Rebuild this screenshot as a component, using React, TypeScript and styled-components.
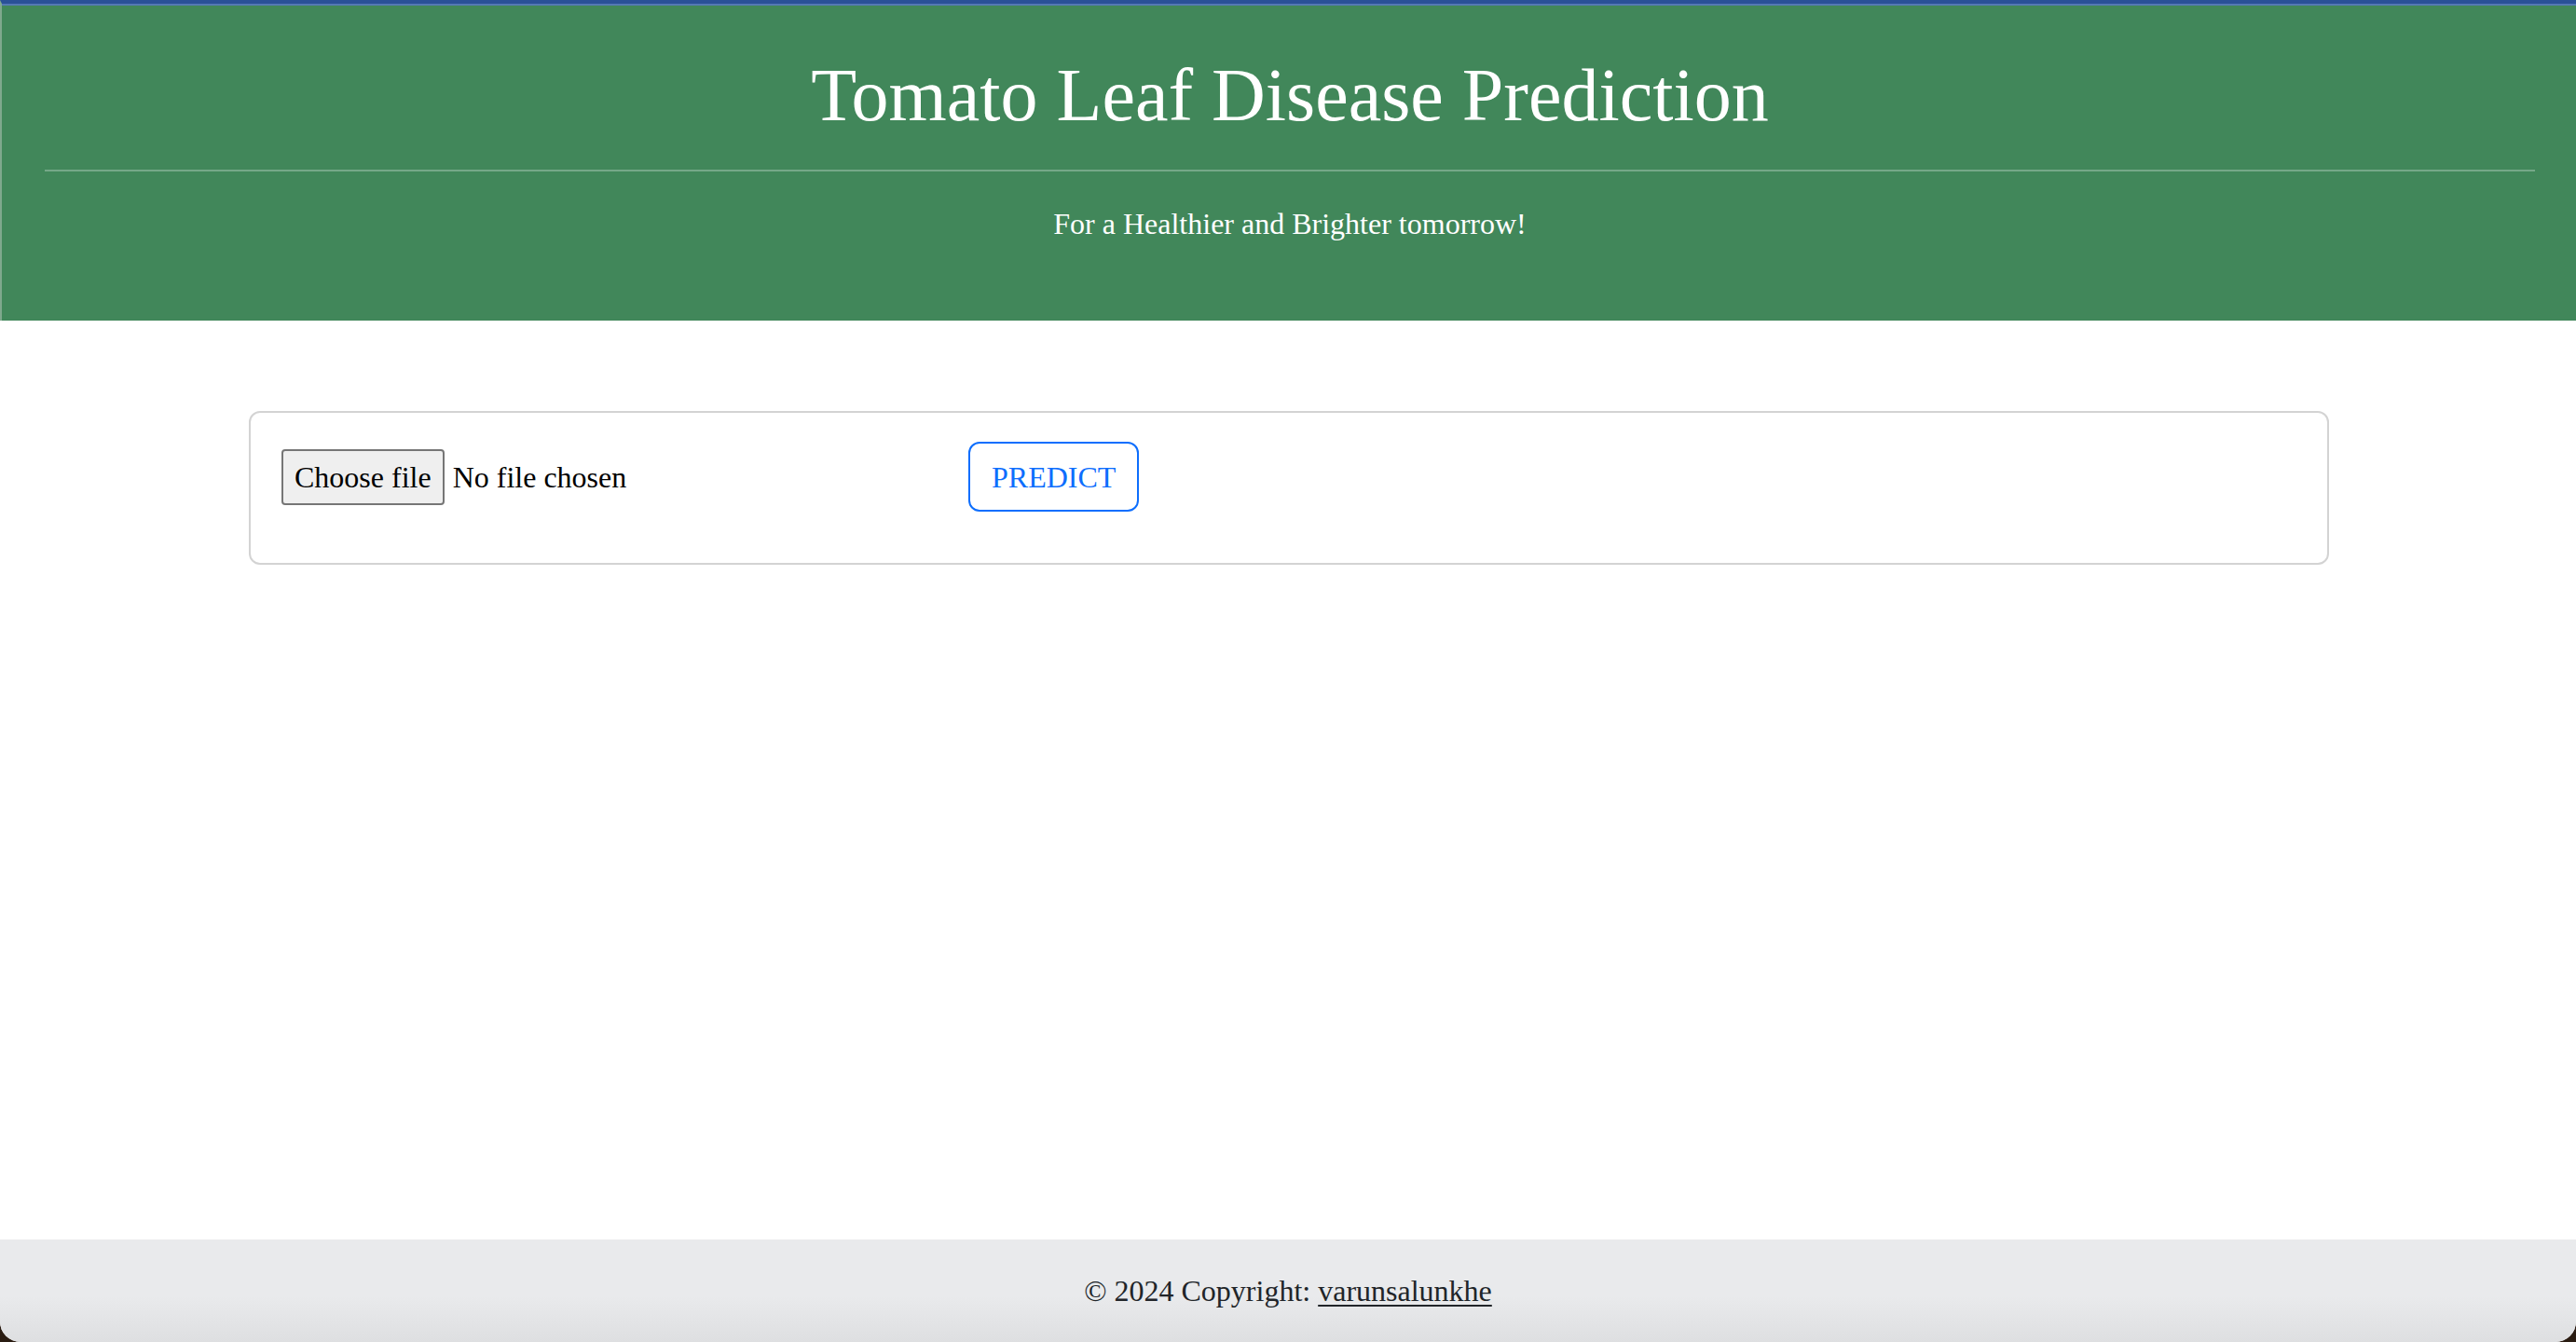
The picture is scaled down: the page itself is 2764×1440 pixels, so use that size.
import React from "react";
import styled, { createGlobalStyle } from "styled-components";

const GlobalStyle = createGlobalStyle`
  html, body {
    margin: 0;
    padding: 0;
    background: #2a1c12;
  }
  body {
    font-family: "Liberation Serif", "Times New Roman", serif;
    font-size: 32px;
    line-height: 1.5;
    color: #212529;
  }
  * { box-sizing: border-box; }
`;

const Window = styled.div`
  min-height: 1440px;
  display: flex;
  flex-direction: column;
  background: #ffffff;
  border-radius: 0 0 22px 22px;
  overflow: hidden;
`;

const Header = styled.header`
  background: #41875a;
  border-top: 4px solid #2a5197;
  border-left: 2px solid #7fa98d;
  box-shadow: inset 0 2px 0 #5479b4;
  padding: 50px 44px 48px 46px;
  text-align: center;
  color: #ffffff;
`;

const Title = styled.h1`
  margin: 0;
  font-size: 80px;
  font-weight: 400;
  line-height: 1.2;
`;

const Rule = styled.hr`
  margin: 32px 0;
  border: 0;
  border-top: 2px solid rgba(255, 255, 255, 0.28);
`;

const Tagline = styled.p`
  margin: 0 0 32px;
  font-size: 32px;
  line-height: 1.5;
`;

const Main = styled.main`
  flex: 1;
  padding: 97px 0 0 2px;
  display: flex;
  justify-content: center;
`;

const Card = styled.section`
  width: 2232px;
  align-self: flex-start;
  border: 2px solid #d3d3d3;
  border-radius: 12px;
  padding: 31px 32px 55px 33px;
`;

const FormRow = styled.form`
  display: flex;
  align-items: center;
  margin: 0;
`;

const FileField = styled.label`
  width: 737px;
  display: flex;
  align-items: center;
  gap: 9px;
  cursor: pointer;
`;

const FileButton = styled.span`
  display: inline-flex;
  align-items: center;
  justify-content: center;
  height: 60px;
  padding: 0 12px;
  background: #efefef;
  border: 2px solid #767676;
  border-radius: 4px;
  color: #000000;
  font-size: 32px;
  line-height: 1;
`;

const FileName = styled.span`
  color: #000000;
  font-size: 32px;
`;

const HiddenInput = styled.input`
  display: none;
`;

const PredictButton = styled.button`
  height: 75px;
  padding: 0 23px;
  background: transparent;
  border: 2px solid #0d6efd;
  border-radius: 12px;
  color: #0d6efd;
  font-family: "Liberation Serif", "Times New Roman", serif;
  font-size: 32px;
  line-height: 1.5;
  text-transform: uppercase;
  cursor: pointer;
`;

const Footer = styled.footer`
  height: 110px;
  padding: 31px 0;
  text-align: center;
  background: linear-gradient(#e9eaec 55%, #dedfe1);
  font-size: 32px;
  line-height: 48px;
  color: #212529;
`;

const Link = styled.a`
  color: #212529;
  text-decoration: underline;
  text-decoration-thickness: 2px;
  text-underline-offset: 4px;
`;

export default function App() {
  return (
    <>
      <GlobalStyle />
      <Window>
        <Header>
          <Title>Tomato Leaf Disease Prediction</Title>
          <Rule />
          <Tagline>For a Healthier and Brighter tomorrow!</Tagline>
        </Header>
        <Main>
          <Card>
            <FormRow onSubmit={(e) => e.preventDefault()}>
              <FileField>
                <HiddenInput type="file" />
                <FileButton>Choose file</FileButton>
                <FileName>No file chosen</FileName>
              </FileField>
              <PredictButton type="submit">Predict</PredictButton>
            </FormRow>
          </Card>
        </Main>
        <Footer>
          © 2024 Copyright: <Link href="#">varunsalunkhe</Link>
        </Footer>
      </Window>
    </>
  );
}
